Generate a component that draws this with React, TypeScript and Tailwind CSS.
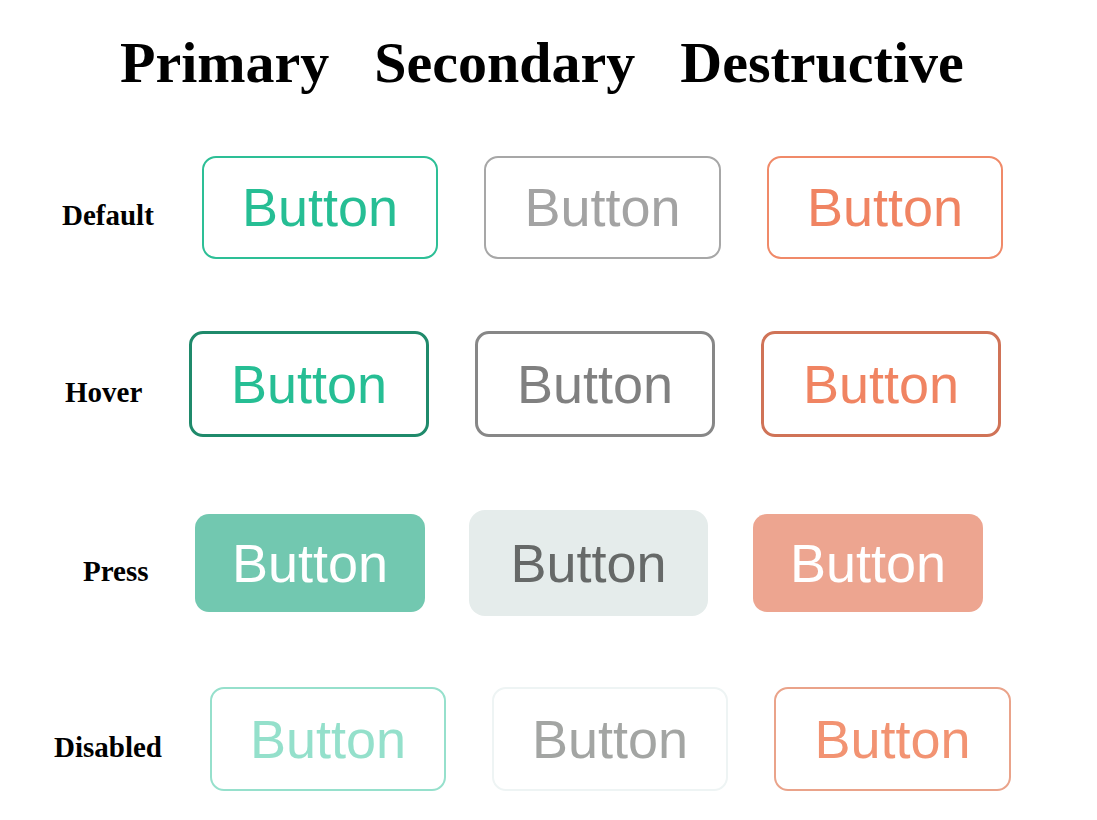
import React from "react";

type Btn = { cls: string; ml: string };
type Row = { label: string; labelBox: string; btns: Btn[] };

const serif = { fontFamily: '"Liberation Serif", "Times New Roman", serif' };
const sans = { fontFamily: '"Liberation Sans", Arial, sans-serif' };

const rows: Row[] = [
  {
    label: "Default",
    labelBox: "w-[202px] pl-[62px]",
    btns: [
      { ml: "ml-0", cls: "w-[236px] h-[103px] border-2 border-[#2dbf96] text-[#26be94] rounded-[14px]" },
      { ml: "ml-[46px]", cls: "w-[237px] h-[103px] border-2 border-[#a7a7a7] text-[#a3a3a3] rounded-[14px]" },
      { ml: "ml-[46px]", cls: "w-[236px] h-[103px] border-2 border-[#f08a69] text-[#f08462] rounded-[14px]" },
    ],
  },
  {
    label: "Hover",
    labelBox: "w-[189px] pl-[65px]",
    btns: [
      { ml: "ml-0", cls: "w-[240px] h-[106px] border-[3px] border-[#1f8a6b] text-[#26be94] rounded-[14px]" },
      { ml: "ml-[46px]", cls: "w-[240px] h-[106px] border-[3px] border-[#878787] text-[#808080] rounded-[14px]" },
      { ml: "ml-[46px]", cls: "w-[240px] h-[106px] border-[3px] border-[#d07357] text-[#f08462] rounded-[14px]" },
    ],
  },
  {
    label: "Press",
    labelBox: "w-[195px] pl-[83px]",
    btns: [
      { ml: "ml-0", cls: "w-[230px] h-[98px] bg-[#72c8b0] text-white rounded-[14px]" },
      { ml: "ml-[44px]", cls: "w-[239px] h-[106px] bg-[#e5eceb] text-[#666968] rounded-[16px]" },
      { ml: "ml-[45px]", cls: "w-[230px] h-[98px] bg-[#eda590] text-white rounded-[14px]" },
    ],
  },
  {
    label: "Disabled",
    labelBox: "w-[210px] pl-[54px]",
    btns: [
      { ml: "ml-0", cls: "w-[236px] h-[104px] border-2 border-[#96e0cc] text-[#94e0cb] rounded-[14px]" },
      { ml: "ml-[46px]", cls: "w-[236px] h-[104px] border-2 border-[#eef4f4] text-[#a3a5a3] rounded-[14px]" },
      { ml: "ml-[46px]", cls: "w-[237px] h-[104px] border-2 border-[#eaa38a] text-[#f29372] rounded-[14px]" },
    ],
  },
];

const rowGaps = ["mt-[62px]", "mt-[71px]", "mt-[73px]", "mt-[70px]"];

export default function App() {
  return (
    <div className="w-[1097px] h-[820px] bg-white overflow-hidden">
      <div
        className="flex pl-[120px] pt-[34px] gap-[45px] text-[58px] leading-[58px] font-bold text-black"
        style={serif}
      >
        <span>Primary</span>
        <span>Secondary</span>
        <span>Destructive</span>
      </div>
      {rows.map((r, i) => (
        <div key={r.label} className={`${rowGaps[i]} flex items-center h-[106px]`}>
          <div className={`${r.labelBox} shrink-0 pt-[18px]`}>
            <span className="text-[29px] leading-[29px] font-bold text-black" style={serif}>
              {r.label}
            </span>
          </div>
          {r.btns.map((b, j) => (
            <div
              key={j}
              className={`${b.ml} ${b.cls} shrink-0 flex items-center justify-center text-[54px] leading-none`}
              style={sans}
            >
              Button
            </div>
          ))}
        </div>
      ))}
    </div>
  );
}
